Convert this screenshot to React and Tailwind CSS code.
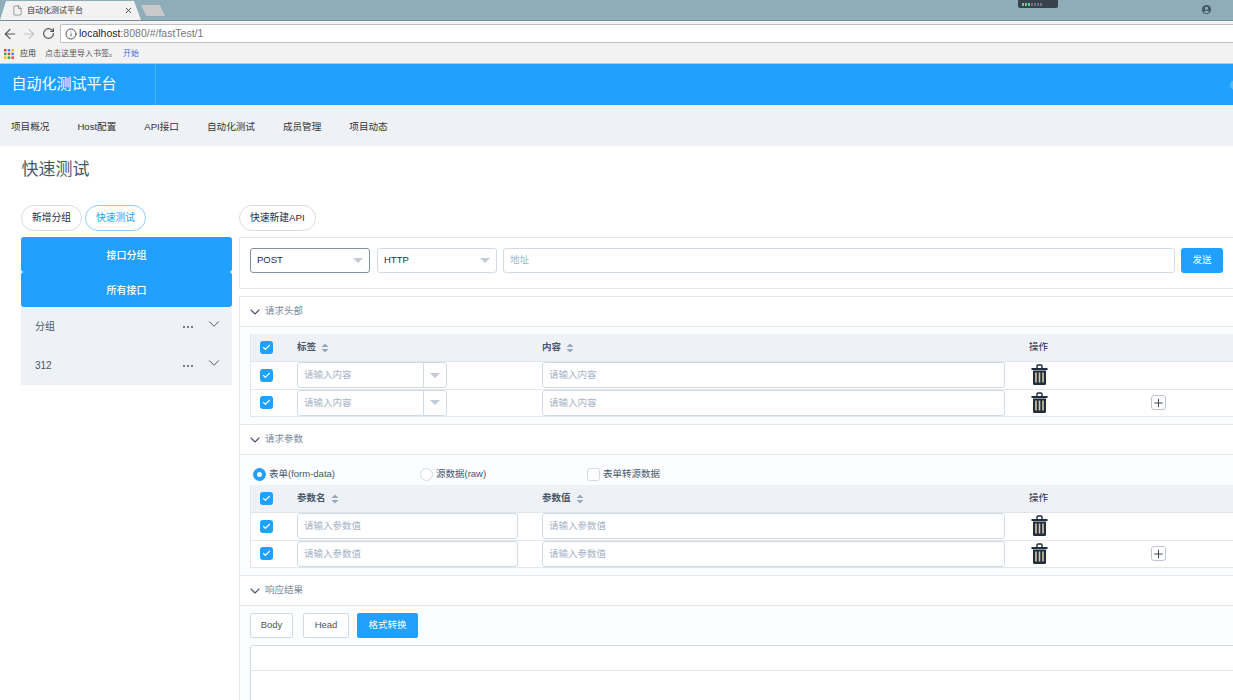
import { ArrowLeft, ArrowRight, RotateCw, Info, Check, ChevronDown, Plus, X, File } from 'lucide-react';
import { MdAccountCircle } from 'react-icons/md';

const Caret = ({ className = 'border-t-[#bfcbd9]' }) => (
  <span className={`block w-0 h-0 border-x-[5px] border-x-transparent border-t-[5px] ${className}`} />
);

const SortIcon = () => (
  <svg width="8" height="10" viewBox="0 0 8 10" className="ml-[5px]">
    <path d="M4 0.5 L7.5 4 L0.5 4 Z M0.5 6 L7.5 6 L4 9.5 Z" fill="#97a8be" />
  </svg>
);

const CheckBox = () => (
  <span className="flex items-center justify-center w-[13px] h-[13px] rounded-[3px] bg-[#20a0ff]">
    <Check size={9} strokeWidth={3} color="#fff" />
  </span>
);

const Trash = () => (
  <svg width="17" height="22" viewBox="0 0 17 22">
    <path d="M6 4 V2 Q6 1 7 1 H10 Q11 1 11 2 V4" fill="none" stroke="#1f2d3d" strokeWidth="1.4" />
    <rect x="0.5" y="4" width="16" height="2" fill="#1f2d3d" />
    <path d="M2 6.5 H15 V19.5 Q15 21 13.5 21 H3.5 Q2 21 2 19.5 Z" fill="#1f2d3d" />
    <path d="M5 8.5 V18.5 M8.5 8.5 V18.5 M12 8.5 V18.5" stroke="#d8c7a6" strokeWidth="1.6" />
  </svg>
);

const TextInput = ({ placeholder, className = 'w-[463px]' }) => (
  <div className={`flex items-center h-[26px] px-[6px] bg-white border border-[#d1dbe5] rounded-[3px] text-[9.5px] text-[#a5b3c6] ${className}`}>
    {placeholder}
  </div>
);

const SelectInput = ({ placeholder }) => (
  <div className="flex h-[26px] w-[150px] bg-white border border-[#d1dbe5] rounded-[3px] text-[9.5px] text-[#a5b3c6]">
    <div className="flex items-center flex-1 px-[6px] border-r border-[#d1dbe5]">{placeholder}</div>
    <div className="flex items-center justify-center w-[22px]"><Caret /></div>
  </div>
);

const SectionHeader = ({ title }) => (
  <div className="flex items-center h-[31px] pl-[7px] bg-white border-t border-b border-[#e4e8ee] text-[9.5px] text-[#7b8a9c]">
    <ChevronDown size={16} strokeWidth={1.6} color="#48576a" />
    <span className="ml-[2px]">{title}</span>
  </div>
);

const TableHead = ({ first, second }) => (
  <div className="flex items-center h-[28px] bg-[#eef1f6] border-b border-[#dfe6ec] text-[9.5px] font-bold text-[#48576a]">
    <div className="w-[46px] pl-[9px]"><CheckBox /></div>
    <div className="flex items-center w-[245px]">{first}<SortIcon /></div>
    <div className="flex items-center w-[487px]">{second}<SortIcon /></div>
    <div className="font-normal text-[#1f2d3d]">操作</div>
  </div>
);

const TableRow = ({ children, withPlus }) => (
  <div className="flex items-center h-[27.5px] bg-white border-b border-[#e4e8ee]">
    <div className="w-[46px] pl-[9px]"><CheckBox /></div>
    <div className="w-[245px]">{children[0]}</div>
    <div className="w-[487px]">{children[1]}</div>
    <div className="w-[122px] pl-[2px]"><Trash /></div>
    {withPlus && (
      <span className="flex items-center justify-center w-[15px] h-[15px] bg-white border border-[#bfc6cf] rounded-[3px]">
        <Plus size={14} strokeWidth={1.6} color="#1f2d3d" />
      </span>
    )}
  </div>
);

const Pill = ({ children, active }) => (
  <div className={`flex items-center h-[26px] px-[10px] rounded-full border bg-white text-[9.75px] ${active ? 'border-[#8fcdff] text-[#20a0ff]' : 'border-[#d8dce2] text-[#1f2d3d]'}`}>
    {children}
  </div>
);

const GroupRow = ({ name }) => (
  <div className="flex items-center h-[39px] pl-[14px] text-[10px] text-[#48576a]">
    <span className="w-[148px]">{name}</span>
    <span className="flex gap-[2px] w-[22px]">
      <i className="block w-[2px] h-[2px] rounded-full bg-[#48576a]" />
      <i className="block w-[2px] h-[2px] rounded-full bg-[#48576a]" />
      <i className="block w-[2px] h-[2px] rounded-full bg-[#48576a]" />
    </span>
    <ChevronDown size={18} strokeWidth={1.3} color="#48576a" className="-mt-[6px]" />
  </div>
);

export default function App() {
  const navItems = ['项目概况', 'Host配置', 'API接口', '自动化测试', '成员管理', '项目动态'];

  return (
    <div className="w-[1233px] h-[700px] overflow-hidden bg-white [font-family:'Liberation_Sans','Noto_Sans_CJK_SC',sans-serif]">
      {/* browser tab strip */}
      <div className="flex items-end h-[21px] bg-[#8fadb9] border-b border-[#74909c]">
        <div className="flex items-center w-[141px] h-[19px] pl-[12px] pr-[8px] bg-[#f2f2f2] [clip-path:polygon(0_100%,6px_0,134px_0,141px_100%)] text-[8px] text-[#333]">
          <File size={11} strokeWidth={1.2} color="#555" />
          <span className="ml-[4px] flex-1">自动化测试平台</span>
          <X size={9} strokeWidth={2.5} color="#444" />
        </div>
        <div className="w-[24px] h-[11px] mb-[4px] bg-[#c9c9c9] [clip-path:polygon(0_0,78%_0,100%_100%,22%_100%)]" />
        <div className="flex items-center self-start w-[40px] h-[8px] ml-[853px] pl-[4px] gap-[1px] bg-[#39424c] rounded-b-[2px]">
          <i className="block w-[2px] h-[3px] bg-[#5fd38d]" />
          <i className="block w-[2px] h-[3px] bg-[#5fd38d]" />
          <i className="block w-[2px] h-[3px] bg-[#5fd38d]" />
          <i className="block w-[2px] h-[3px] bg-[#6b7680]" />
          <i className="block w-[2px] h-[3px] bg-[#6b7680]" />
          <i className="block w-[2px] h-[3px] bg-[#6b7680]" />
          <i className="block w-[2px] h-[3px] bg-[#6b7680]" />
        </div>
        <MdAccountCircle size={11} color="#46586a" className="self-start mt-[4px] ml-[143px]" />
      </div>

      {/* address bar */}
      <div className="flex items-center h-[22px] pt-[3px] pl-[2px] bg-[#f2f2f2]">
        <ArrowLeft size={16} strokeWidth={1.8} color="#555" />
        <ArrowRight size={16} strokeWidth={1.8} color="#c4c4c4" className="ml-[3px]" />
        <RotateCw size={13} strokeWidth={2.2} color="#555" className="ml-[5px]" />
        <div className="flex items-center flex-1 h-[19px] ml-[5px] pl-[4px] bg-white border border-[#c0c0c0] rounded-l-[2px] border-r-0 text-[10.5px] text-[#777]">
          <Info size={12} strokeWidth={1.8} color="#444" />
          <span className="ml-[2px] text-[#222]">localhost</span>:8080/#/fastTest/1
        </div>
      </div>

      {/* bookmarks */}
      <div className="flex items-center h-[21px] pt-[2px] pl-[4px] bg-[#f2f2f2] border-b border-[#c4c8cb] text-[8px] text-[#555]">
        <svg width="10" height="10" viewBox="0 0 10 10">
          <path d="M0 0h2.5v2.5H0z" fill="#ea4335" />
          <path d="M3.7 0h2.5v2.5H3.7z" fill="#4285f4" />
          <path d="M7.4 0h2.5v2.5H7.4z" fill="#fbbc05" />
          <path d="M0 3.7h2.5v2.5H0z" fill="#34a853" />
          <path d="M3.7 3.7h2.5v2.5H3.7z" fill="#ea4335" />
          <path d="M7.4 3.7h2.5v2.5H7.4z" fill="#4285f4" />
          <path d="M0 7.4h2.5v2.5H0z" fill="#fbbc05" />
          <path d="M3.7 7.4h2.5v2.5H3.7z" fill="#34a853" />
          <path d="M7.4 7.4h2.5v2.5H7.4z" fill="#ea4335" />
        </svg>
        <span className="ml-[6px] text-[#333]">应用</span>
        <span className="ml-[9px]">点击这里导入书签。</span>
        <span className="ml-[6px] text-[#4a6fd8]">开始</span>
      </div>

      {/* app header */}
      <div className="flex items-center h-[41px] bg-[#20a0ff]">
        <div className="flex items-center w-[156px] h-full pl-[11.5px] border-r border-[#4db3ff] text-[15px] text-white">自动化测试平台</div>
        <span className="ml-auto -mr-[7px] w-[10px] h-[10px] rounded-full bg-[#58b9ff]" />
      </div>

      {/* project nav */}
      <div className="flex items-center h-[41px] pt-[3px] pl-[11px] gap-[28px] bg-[#eef1f6] text-[9.6px] text-[#333]">
        {navItems.map((item) => (
          <span key={item}>{item}</span>
        ))}
      </div>

      <div className="flex items-center h-[47px] pl-[21.5px] text-[17px] text-[#48576a]">快速测试</div>

      <div className="flex pl-[21px] pt-[12px]">
        {/* left column */}
        <div className="w-[211px] shrink-0">
          <div className="flex gap-[3px] h-[32px]">
            <Pill>新增分组</Pill>
            <Pill active>快速测试</Pill>
          </div>
          <div className="flex items-center justify-center h-[35px] pt-[1px] rounded-[3px] bg-[#20a0ff] text-[10px] font-medium text-white">接口分组</div>
          <div className="flex items-center justify-center h-[35px] pt-[1px] rounded-[3px] bg-[#20a0ff] text-[10px] font-medium text-white">所有接口</div>
          <div className="bg-[#eef1f6]">
            <GroupRow name="分组" />
            <GroupRow name="312" />
          </div>
        </div>

        {/* right column */}
        <div className="flex-1 ml-[7px] min-w-0">
          <div className="flex h-[32px]">
            <Pill>快速新建API</Pill>
          </div>

          <div className="flex items-center h-[52px] pl-[10px] pb-[5px] mb-[7px] border-t border-b border-l border-[#e4e8ee]">
            <div className="flex items-center justify-between w-[120px] h-[25px] px-[6px] border border-[#8391a5] rounded-[3px] text-[9.5px] text-[#1f2d3d]">POST<Caret /></div>
            <div className="flex items-center justify-between w-[120px] h-[25px] ml-[7px] px-[6px] border border-[#d1dbe5] rounded-[3px] text-[9.5px] text-[#1f2d3d]">HTTP<Caret /></div>
            <TextInput placeholder="地址" className="w-[672px] ml-[6px] !h-[25px]" />
            <div className="flex items-center justify-center w-[42px] h-[25px] ml-[6px] rounded-[3px] bg-[#20a0ff] text-[9.5px] text-white">发送</div>
          </div>

          <div className="border-l border-[#e4e8ee] bg-[#fbfdff]">
            <SectionHeader title="请求头部" />
            <div className="pt-[7px] pb-[7px] pl-[10px]">
              <div className="border-l border-[#e4e8ee]">
                <TableHead first="标签" second="内容" />
                <TableRow>
                  <SelectInput placeholder="请输入内容" />
                  <TextInput placeholder="请输入内容" />
                </TableRow>
                <TableRow withPlus>
                  <SelectInput placeholder="请输入内容" />
                  <TextInput placeholder="请输入内容" />
                </TableRow>
              </div>
            </div>

            <SectionHeader title="请求参数" />
            <div className="pb-[7px] pl-[10px]">
              <div className="flex items-center h-[30px] pt-[8px] text-[9.5px] text-[#48576a]">
                <span className="flex items-center justify-center w-[13px] h-[13px] ml-[3px] rounded-full bg-[#20a0ff]">
                  <i className="block w-[5px] h-[5px] rounded-full bg-white" />
                </span>
                <span className="w-[154px] pl-[3px]">表单(form-data)</span>
                <span className="w-[13px] h-[13px] rounded-full bg-white border border-[#d1dbe5]" />
                <span className="w-[154px] pl-[3px]">源数据(raw)</span>
                <span className="w-[13px] h-[13px] rounded-[3px] bg-white border border-[#d1dbe5]" />
                <span className="pl-[3px]">表单转源数据</span>
              </div>
              <div className="border-l border-[#e4e8ee]">
                <TableHead first="参数名" second="参数值" />
                <TableRow>
                  <TextInput placeholder="请输入参数值" className="w-[221px]" />
                  <TextInput placeholder="请输入参数值" />
                </TableRow>
                <TableRow withPlus>
                  <TextInput placeholder="请输入参数值" className="w-[221px]" />
                  <TextInput placeholder="请输入参数值" />
                </TableRow>
              </div>
            </div>

            <SectionHeader title="响应结果" />
            <div className="pt-[7px] pl-[10px]">
              <div className="flex gap-[10px]">
                <div className="flex items-center justify-center w-[43px] h-[25px] bg-white border border-[#d1dbe5] rounded-[2px] text-[9.5px] text-[#48576a]">Body</div>
                <div className="flex items-center justify-center w-[46px] h-[25px] bg-white border border-[#d1dbe5] rounded-[2px] text-[9.5px] text-[#48576a]">Head</div>
                <div className="flex items-center justify-center w-[61px] h-[25px] -ml-[2px] bg-[#20a0ff] rounded-[2px] text-[9.5px] text-white">格式转换</div>
              </div>
              <div className="h-[60px] mt-[7px] -mr-[4px] bg-white border border-[#d1dbe5] rounded-tl-[3px]">
                <div className="h-[25px] border-b border-[#e4e8ee]" />
              </div>
            </div>
          </div>
        </div>
      </div>
    </div>
  );
}
